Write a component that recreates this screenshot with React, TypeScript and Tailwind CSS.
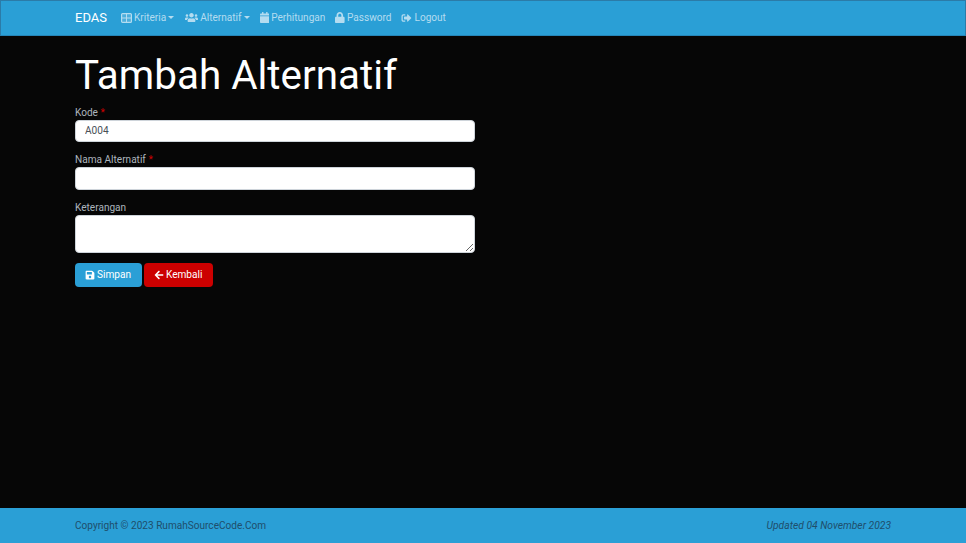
import React from 'react';
import { FaUsers, FaCalendar, FaLock, FaSignOutAlt, FaSave, FaArrowLeft } from 'react-icons/fa';

// kisi tabel: bingkai dengan garis tengah, sel agak transparan
function TableIcon() {
  return (
    <svg viewBox="0 0 11 10" className="w-[11px] h-[10px]" fill="none" stroke="currentColor">
      <rect x="0.6" y="0.6" width="9.8" height="8.8" rx="1" fill="currentColor" fillOpacity="0.25" strokeWidth="1.2" />
      <path d="M5.5 1V9M1 5H10" strokeWidth="1" />
    </svg>
  );
}

const menus = [
  { label: 'Kriteria', icon: <TableIcon />, caret: true, cls: '' },
  { label: 'Alternatif', icon: <FaUsers className="w-[13px] h-[11px]" />, caret: true, cls: 'ml-[1px]' },
  { label: 'Perhitungan', icon: <FaCalendar className="w-[9.6px] h-[11px]" />, caret: false, cls: '' },
  { label: 'Password', icon: <FaLock className="w-[9.6px] h-[11px]" />, caret: false, cls: '' },
  { label: 'Logout', icon: <FaSignOutAlt className="w-[11px] h-[10px]" />, caret: false, cls: '' },
];

function Label({ text, required }: { text: string; required?: boolean }) {
  return (
    <label className="block text-[10.08px] leading-[15px] text-[#adb5bd]">
      {text} {required && <span className="text-[#c00]">*</span>}
    </label>
  );
}

export default function App() {
  return (
    <div className="h-[543px] flex flex-col bg-[#060606] text-[10.08px] font-['Roboto',sans-serif]">
      <nav className="h-[36px] shrink-0 bg-[#2a9fd6] border border-[#2b7ba8] border-b-[#2585b8]">
        <div className="w-[846px] mx-auto px-[15px] h-full flex items-center">
          <span className="text-[13px] text-white mr-[14px]">EDAS</span>
          <ul className="flex items-center gap-[10px]">
            {menus.map((m) => (
              <li key={m.label} className={`flex items-center gap-[2px] text-[#b4dcf0] ${m.cls}`}>
                {m.icon}
                {m.label}
                {m.caret && <span className="w-0 h-0 border-x-[3px] border-x-transparent border-t-[3px] border-t-[#b4dcf0]" />}
              </li>
            ))}
          </ul>
        </div>
      </nav>

      <main className="flex-1 w-[846px] mx-auto px-[15px]">
        <h1 className="text-[40.4px] leading-[50px] text-white font-normal mt-[15px] mb-[3.5px]">Tambah Alternatif</h1>
        <form className="w-[400px]">
          <div className="mb-[10px]">
            <Label text="Kode" required />
            <input
              readOnly
              value="A004"
              className="block w-full h-[22.6px] rounded-[4px] border border-[#ced4da] bg-white px-[9px] text-[10.08px] text-[#495057] outline-none"
            />
          </div>
          <div className="mb-[10px]">
            <Label text="Nama Alternatif" required />
            <input readOnly className="block w-full h-[22.6px] rounded-[4px] border border-[#ced4da] bg-white px-[9px] outline-none" />
          </div>
          <div className="mb-[10px]">
            <Label text="Keterangan" />
            <textarea readOnly className="block w-full h-[38px] rounded-[4px] border border-[#ced4da] bg-white px-[9px] outline-none" />
          </div>
          <div className="flex gap-[2px]">
            <button type="button" className="h-[24px] pl-[10px] pr-[11px] rounded-[4px] bg-[#2a9fd6] text-white flex items-center gap-[2px]">
              <FaSave className="w-[10px] h-[10px]" /> Simpan
            </button>
            <button type="button" className="h-[24px] pl-[10px] pr-[11px] rounded-[4px] bg-[#c00] text-white flex items-center gap-[2px]">
              <FaArrowLeft className="w-[10px] h-[10px]" /> Kembali
            </button>
          </div>
        </form>
      </main>

      <footer className="h-[35px] shrink-0 bg-[#2a9fd6] text-[#1f4e6b]">
        <div className="w-[846px] mx-auto px-[15px] h-full flex items-center justify-between">
          <span>Copyright © 2023 RumahSourceCode.Com</span>
          <em className="text-[10.3px]">Updated 04 November 2023</em>
        </div>
      </footer>
    </div>
  );
}
